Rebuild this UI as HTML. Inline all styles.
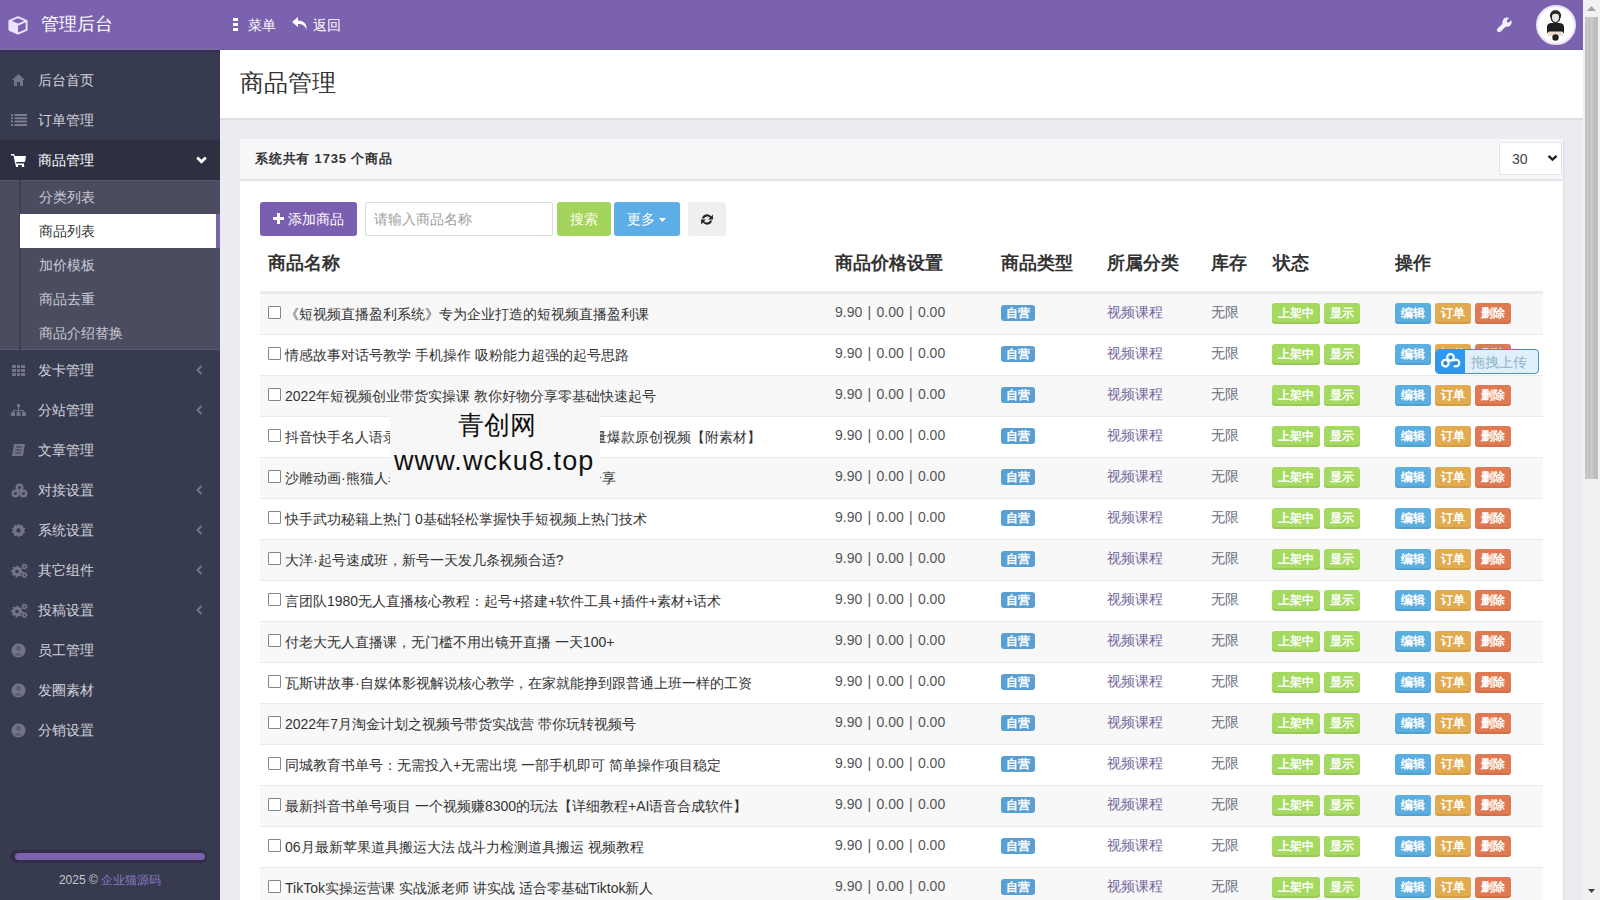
<!DOCTYPE html>
<html><head><meta charset="utf-8">
<style>
*{box-sizing:border-box;margin:0;padding:0}
html,body{width:1600px;height:900px;overflow:hidden;white-space:nowrap}
body{font-family:"Liberation Sans",sans-serif;font-size:14px;color:#333;background:#ebebf1;position:relative}
.abs{position:absolute}
#hdr{position:absolute;left:0;top:0;width:1583px;height:50px;background:#7a62ae;color:#fff}
#side{position:absolute;left:0;top:50px;width:220px;height:850px;background:#363b4f}
#sb{position:absolute;left:1583px;top:0;width:17px;height:900px;background:#f1f1f1}
.mi{position:absolute;left:0;width:220px;height:40px;color:#d0d1da;font-size:14px;line-height:40px}
.mi .t{position:absolute;left:38px;top:0}
.mi svg{position:absolute;left:11px;top:13px}
.mi .ar{position:absolute;left:196px;top:15px}
.sub{position:absolute;left:20px;width:200px;height:34px;line-height:34px;color:#c9cad4;padding-left:19px}
#tbl{position:absolute;left:260px;top:0;width:1283px;height:900px}
.th{position:absolute;top:250px;font-size:18px;font-weight:bold;line-height:26px;color:#333}
.row{position:absolute;left:0;width:1283px;height:41px;border-top:1px solid #eaeaea}
.row span{position:absolute}
.cb{left:8px;top:12px;width:13px;height:13px;border:1px solid #858585;border-radius:1px;background:#fff}
.nm{left:25px;top:10px;line-height:20px;color:#333;white-space:nowrap}
.pr{left:575px;top:8px;line-height:20px;color:#555;word-spacing:1.4px}
.lb{left:741px;top:11px;width:34px;height:16px;line-height:16px;border-radius:3px;background:#5a9fd2;color:#fff;font-size:12px;font-weight:bold;text-align:center}
.ct{left:847px;top:8px;line-height:20px;color:#74679c}
.st{left:951px;top:8px;line-height:20px;color:#6a6c80}
.b{top:9px;height:21px;width:36px;line-height:21px;border-radius:3px;color:#fff;font-size:12px;font-weight:bold;text-align:center;box-shadow:inset 0 -2px 0 rgba(0,0,0,0.07)}
.g{background:#a5d960}.bl{background:#5aaee0}.or{background:#e2ab50}.rd{background:#e07a52}
.btn{position:absolute;top:202px;height:34px;line-height:34px;border-radius:3px;color:#fff;text-align:center;font-size:14px}
</style></head>
<body>
<div id="hdr"><div class="abs" style="left:0;top:48px;width:220px;height:2px;background:#786d9f"></div><div class="abs" style="left:220px;top:49px;width:1363px;height:1px;background:#6e6198"></div>
  <svg class="abs" style="left:8px;top:16px" width="20" height="19" viewBox="0 0 20 19"><path d="M10 1.2 L18.6 4.8 L18.6 13.8 L10 17.6 L1.4 13.8 L1.4 4.8 Z" fill="none" stroke="#ece4fc" stroke-width="1.9" stroke-linejoin="round"/><path d="M1.4 4.8 L10 8.6 L10 17.6 L1.4 13.8Z" fill="#ece4fc"/><path d="M1.4 4.8 L10 8.6 L18.6 4.8" fill="none" stroke="#ece4fc" stroke-width="1.9"/></svg>
  <div class="abs" style="left:41px;top:12px;font-size:18px;line-height:24px">管理后台</div>
  <svg class="abs" style="left:233px;top:18px" width="5" height="13" viewBox="0 0 5 13"><rect x="0" y="0" width="5" height="3" fill="#fff"/><rect x="0" y="5" width="5" height="3" fill="#fff"/><rect x="0" y="10" width="5" height="3" fill="#fff"/></svg>
  <div class="abs" style="left:248px;top:15px;font-size:14px;line-height:20px">菜单</div>
  <svg class="abs" style="left:292px;top:17px" width="16" height="14" viewBox="0 0 16 14"><path d="M6 0 L0 5 L6 10 L6 7 C10 7 13 8 14.5 13 C15 7 12 3.5 6 3.5 Z" fill="#fff"/></svg>
  <div class="abs" style="left:313px;top:15px;font-size:14px;line-height:20px">返回</div>
  <svg class="abs" style="left:1496px;top:17px" width="16" height="16" viewBox="0 0 16 16"><line x1="3.2" y1="13" x2="9.5" y2="6.7" stroke="#f6f1ff" stroke-width="4.4" stroke-linecap="round"/><circle cx="11" cy="5.2" r="4.6" fill="#f6f1ff"/><circle cx="12.2" cy="4" r="1.5" fill="#7a62ae"/><path d="M11.2 3 L14.2 0 L16.2 2 L13.2 5Z" fill="#7a62ae"/></svg>
  <div class="abs" style="left:1536px;top:5px;width:40px;height:40px;border-radius:50%;background:#fff;border:2px solid #e9e1f6;overflow:hidden">
    <svg style="position:absolute;left:-2px;top:-2px" width="40" height="40" viewBox="0 0 40 40"><path d="M11 28 L11 22 Q11 18.5 15 18 L24 18 Q28 18.5 28 22 L28 28 Z" fill="#1f1f1f"/><rect x="11.5" y="26.5" width="16" height="4.5" rx="2" fill="#f0dccd"/><ellipse cx="19.5" cy="10.5" rx="5.6" ry="5" fill="#2a2a2a"/><ellipse cx="19.5" cy="12.3" rx="4.2" ry="5.4" fill="#ebe4e2" stroke="#1f1f1f" stroke-width="1.2"/><path d="M14.6 10.5 Q14.6 5.2 19.5 5.2 Q24.4 5.2 24.4 10.5 Q22 8.6 19.5 8.8 Q17 8.6 14.6 10.5Z" fill="#2a2a2a"/><circle cx="19.5" cy="32.5" r="3.2" fill="#1f1f1f"/></svg>
  </div>
</div>
<div id="side">
  <div class="abs" style="left:0;top:0;width:220px;height:4px;background:linear-gradient(#382c5b 0,#382c5b 2px,#3b3354 2px,#3b3354 3px,#3c3950 3px)"></div>
  <div class="mi" style="top:10px"><svg width="15" height="14" viewBox="0 0 15 14"><path d="M7.5 1 L14 7 L12 7 L12 13 L9 13 L9 9 L6 9 L6 13 L3 13 L3 7 L1 7 Z" fill="#737487"/></svg><span class="t">后台首页</span></div>
  <div class="mi" style="top:50px"><svg width="17" height="14" viewBox="0 0 17 14"><path d="M0 1h2v2h-2zM3.5 1h12.5v2h-12.5zM0 4.3h2v2h-2zM3.5 4.3h12.5v2h-12.5zM0 7.6h2v2h-2zM3.5 7.6h12.5v2h-12.5zM0 10.9h2v2h-2zM3.5 10.9h12.5v2h-12.5z" fill="#7c7d90"/></svg><span class="t">订单管理</span></div>
  <div class="mi" style="top:90px;background:#2e3042;color:#fff"><svg width="16" height="14" viewBox="0 0 16 14"><path d="M0 1 L3 1 L4 3 L15 3 L14 9 L5 9 L5.5 10.5 L13 10.5 L13 12 L4.5 12 L2.5 2.5 L0 2.5Z" fill="#fff"/><circle cx="6" cy="13" r="1.3" fill="#fff"/><circle cx="12" cy="13" r="1.3" fill="#fff"/></svg><span class="t">商品管理</span><svg style="left:196px;top:16px" width="11" height="8" viewBox="0 0 11 8"><path d="M1.2 1.5 L5.5 5.8 L9.8 1.5" stroke="#fff" stroke-width="2.8" fill="none"/></svg></div>
  <div class="abs" style="left:0;top:130px;width:220px;height:170px;background:#4b4c60;border-top:1px solid #56576a;border-bottom:1px solid #5a5b6e"></div>
  <div class="abs" style="left:19px;top:130px;width:2px;height:170px;background:#3f4053"></div>
  <div class="sub" style="top:130px">分类列表</div>
  <div class="sub" style="top:164px;background:#fff;color:#333;width:196px">商品列表</div>
  <div class="abs" style="left:216px;top:164px;width:4px;height:34px;background:#7a62ae"></div>
  <div class="sub" style="top:198px">加价模板</div>
  <div class="sub" style="top:232px">商品去重</div>
  <div class="sub" style="top:266px">商品介绍替换</div>
  <div class="mi" style="top:300px"><svg width="15" height="14" viewBox="0 0 15 14"><path d="M1 2h4v3h-4zM6 2h3v3h-3zM10 2h4v3h-4zM1 6h4v3h-4zM6 6h3v3h-3zM10 6h4v3h-4zM1 10h4v3h-4zM6 10h3v3h-3zM10 10h4v3h-4z" fill="#737487"/></svg><span class="t">发卡管理</span><svg class="ar" width="7" height="10" viewBox="0 0 7 10"><path d="M5.5 1 L1.5 5 L5.5 9" stroke="#737487" stroke-width="2" fill="none"/></svg></div>
  <div class="mi" style="top:340px"><svg width="15" height="14" viewBox="0 0 15 14"><path d="M6 1h3v3h-3zM7 4h1v3h-1zM2 7h11v1h-11zM2 7h1v2h-1zM12 7h1v2h-1zM7 7h1v2h-1zM0 9h4v4h-4zM5.5 9h4v4h-4zM11 9h4v4h-4z" fill="#737487"/></svg><span class="t">分站管理</span><svg class="ar" width="7" height="10" viewBox="0 0 7 10"><path d="M5.5 1 L1.5 5 L5.5 9" stroke="#737487" stroke-width="2" fill="none"/></svg></div>
  <div class="mi" style="top:380px"><svg width="15" height="14" viewBox="0 0 15 14"><path d="M3 1 L14 1 L12 13 L1 13 Z" fill="#737487"/><path d="M5 4h6M4.5 7h6M4 10h6" stroke="#363b4f" stroke-width="1.2"/></svg><span class="t">文章管理</span></div>
  <div class="mi" style="top:420px"><svg width="17" height="15" viewBox="0 0 17 15"><circle cx="8.5" cy="4.5" r="4" fill="#737487"/><circle cx="4.5" cy="10.5" r="4" fill="#737487"/><circle cx="12.5" cy="10.5" r="4" fill="#737487"/><circle cx="8.5" cy="4.5" r="1.5" fill="#363b4f"/><circle cx="4.5" cy="10.5" r="1.5" fill="#363b4f"/><circle cx="12.5" cy="10.5" r="1.5" fill="#363b4f"/></svg><span class="t">对接设置</span><svg class="ar" width="7" height="10" viewBox="0 0 7 10"><path d="M5.5 1 L1.5 5 L5.5 9" stroke="#737487" stroke-width="2" fill="none"/></svg></div>
  <div class="mi" style="top:460px"><svg width="15" height="15" viewBox="0 0 15 15"><path d="M7.5 0.5 L9 2.5 L11.5 1.8 L12 4.3 L14.3 5.5 L13 7.5 L14.3 9.5 L12 10.7 L11.5 13.2 L9 12.5 L7.5 14.5 L6 12.5 L3.5 13.2 L3 10.7 L0.7 9.5 L2 7.5 L0.7 5.5 L3 4.3 L3.5 1.8 L6 2.5 Z" fill="#737487"/><circle cx="7.5" cy="7.5" r="2.2" fill="#363b4f"/></svg><span class="t">系统设置</span><svg class="ar" width="7" height="10" viewBox="0 0 7 10"><path d="M5.5 1 L1.5 5 L5.5 9" stroke="#737487" stroke-width="2" fill="none"/></svg></div>
  <div class="mi" style="top:500px"><svg width="17" height="16" viewBox="0 0 17 16"><path d="M12.00 8.50 L11.88 9.67 L10.25 10.26 L9.82 11.06 L10.24 12.74 L9.33 13.49 L7.76 12.75 L6.90 13.01 L6.00 14.50 L4.83 14.38 L4.24 12.75 L3.44 12.32 L1.76 12.74 L1.01 11.83 L1.75 10.26 L1.49 9.40 L0.00 8.50 L0.12 7.33 L1.75 6.74 L2.18 5.94 L1.76 4.26 L2.67 3.51 L4.24 4.25 L5.10 3.99 L6.00 2.50 L7.17 2.62 L7.76 4.25 L8.56 4.68 L10.24 4.26 L10.99 5.17 L10.25 6.74 L10.51 7.60ZM16.70 3.50 L16.59 4.33 L15.58 4.70 L15.20 5.20 L15.10 6.27 L14.33 6.59 L13.50 5.90 L12.88 5.82 L11.90 6.27 L11.24 5.76 L11.42 4.70 L11.18 4.12 L10.30 3.50 L10.41 2.67 L11.42 2.30 L11.80 1.80 L11.90 0.73 L12.67 0.41 L13.50 1.10 L14.12 1.18 L15.10 0.73 L15.76 1.24 L15.58 2.30 L15.82 2.88ZM16.70 12.00 L16.59 12.83 L15.58 13.20 L15.20 13.70 L15.10 14.77 L14.33 15.09 L13.50 14.40 L12.88 14.32 L11.90 14.77 L11.24 14.26 L11.42 13.20 L11.18 12.62 L10.30 12.00 L10.41 11.17 L11.42 10.80 L11.80 10.30 L11.90 9.23 L12.67 8.91 L13.50 9.60 L14.12 9.68 L15.10 9.23 L15.76 9.74 L15.58 10.80 L15.82 11.38Z" fill="#737487"/><circle cx="6" cy="8.5" r="1.8" fill="#363b4f"/><circle cx="13.5" cy="3.5" r="0.9" fill="#363b4f"/><circle cx="13.5" cy="12" r="0.9" fill="#363b4f"/></svg><span class="t">其它组件</span><svg class="ar" width="7" height="10" viewBox="0 0 7 10"><path d="M5.5 1 L1.5 5 L5.5 9" stroke="#737487" stroke-width="2" fill="none"/></svg></div>
  <div class="mi" style="top:540px"><svg width="17" height="16" viewBox="0 0 17 16"><path d="M12.00 8.50 L11.88 9.67 L10.25 10.26 L9.82 11.06 L10.24 12.74 L9.33 13.49 L7.76 12.75 L6.90 13.01 L6.00 14.50 L4.83 14.38 L4.24 12.75 L3.44 12.32 L1.76 12.74 L1.01 11.83 L1.75 10.26 L1.49 9.40 L0.00 8.50 L0.12 7.33 L1.75 6.74 L2.18 5.94 L1.76 4.26 L2.67 3.51 L4.24 4.25 L5.10 3.99 L6.00 2.50 L7.17 2.62 L7.76 4.25 L8.56 4.68 L10.24 4.26 L10.99 5.17 L10.25 6.74 L10.51 7.60ZM16.70 3.50 L16.59 4.33 L15.58 4.70 L15.20 5.20 L15.10 6.27 L14.33 6.59 L13.50 5.90 L12.88 5.82 L11.90 6.27 L11.24 5.76 L11.42 4.70 L11.18 4.12 L10.30 3.50 L10.41 2.67 L11.42 2.30 L11.80 1.80 L11.90 0.73 L12.67 0.41 L13.50 1.10 L14.12 1.18 L15.10 0.73 L15.76 1.24 L15.58 2.30 L15.82 2.88ZM16.70 12.00 L16.59 12.83 L15.58 13.20 L15.20 13.70 L15.10 14.77 L14.33 15.09 L13.50 14.40 L12.88 14.32 L11.90 14.77 L11.24 14.26 L11.42 13.20 L11.18 12.62 L10.30 12.00 L10.41 11.17 L11.42 10.80 L11.80 10.30 L11.90 9.23 L12.67 8.91 L13.50 9.60 L14.12 9.68 L15.10 9.23 L15.76 9.74 L15.58 10.80 L15.82 11.38Z" fill="#737487"/><circle cx="6" cy="8.5" r="1.8" fill="#363b4f"/><circle cx="13.5" cy="3.5" r="0.9" fill="#363b4f"/><circle cx="13.5" cy="12" r="0.9" fill="#363b4f"/></svg><span class="t">投稿设置</span><svg class="ar" width="7" height="10" viewBox="0 0 7 10"><path d="M5.5 1 L1.5 5 L5.5 9" stroke="#737487" stroke-width="2" fill="none"/></svg></div>
  <div class="mi" style="top:580px"><svg width="15" height="15" viewBox="0 0 15 15"><circle cx="7.5" cy="7.5" r="7" fill="#737487"/><circle cx="7.5" cy="5.5" r="2.5" fill="#5c5e70"/><path d="M3 12.5 Q7.5 7 12 12.5Z" fill="#5c5e70"/></svg><span class="t">员工管理</span></div>
  <div class="mi" style="top:620px"><svg width="15" height="15" viewBox="0 0 15 15"><circle cx="7.5" cy="7.5" r="7" fill="#737487"/><circle cx="7.5" cy="5.5" r="2.5" fill="#5c5e70"/><path d="M3 12.5 Q7.5 7 12 12.5Z" fill="#5c5e70"/></svg><span class="t">发圈素材</span></div>
  <div class="mi" style="top:660px"><svg width="15" height="15" viewBox="0 0 15 15"><circle cx="7.5" cy="7.5" r="7" fill="#737487"/><circle cx="7.5" cy="5.5" r="2.5" fill="#5c5e70"/><path d="M3 12.5 Q7.5 7 12 12.5Z" fill="#5c5e70"/></svg><span class="t">分销设置</span></div>
  <div class="abs" style="left:10px;top:800px;width:197px;height:13px;border-radius:6px;background:#322e4a"></div><div class="abs" style="left:15px;top:803px;width:190px;height:7px;border-radius:4px;background:#7a62ae"></div>
  <div class="abs" style="left:0;top:822px;width:220px;text-align:center;font-size:12px;line-height:16px;color:#c8c8d0">2025 © <span style="color:#8a78c0">企业猫源码</span></div>
</div>
<!-- content -->
<div class="abs" style="left:220px;top:50px;width:1363px;height:70px;background:#fff;border-bottom:2px solid #dedee4"></div>
<div class="abs" style="left:240px;top:67px;font-size:24px;line-height:32px;color:#333">商品管理</div>
<div class="abs" style="left:240px;top:139px;width:1323px;height:761px;background:#fff;box-shadow:1px 1px 2px rgba(0,0,0,0.06)"></div>
<div class="abs" style="left:240px;top:139px;width:1323px;height:42px;background:#f8f8fa;border-bottom:2px solid #e4e4e9"></div>
<div class="abs" style="left:255px;top:149px;font-size:13px;font-weight:bold;line-height:20px;letter-spacing:0.8px">系统共有 1735 个商品</div>
<div class="abs" style="left:1499px;top:142px;width:63px;height:33px;background:#fff;border:1px solid #e3e3e8;border-radius:2px"></div>
<div class="abs" style="left:1512px;top:149px;font-size:14px;line-height:20px;color:#444">30</div>
<svg class="abs" style="left:1547px;top:154px" width="11" height="8" viewBox="0 0 11 8"><path d="M1.5 1.8 L5.5 5.6 L9.5 1.8" stroke="#222" stroke-width="2.4" fill="none"/></svg>
<!-- toolbar -->
<div class="btn" style="left:260px;width:97px;background:#7a5fb0">
  <svg style="position:absolute;left:13px;top:11px" width="11" height="11" viewBox="0 0 11 11"><path d="M4 0h3v4h4v3h-4v4h-3v-4h-4v-3h4z" fill="#fff"/></svg><span style="position:absolute;left:28px;top:0">添加商品</span></div>
<div class="abs" style="left:365px;top:202px;width:188px;height:34px;border:1px solid #dcdcdc;border-radius:2px;background:#fff"></div>
<div class="abs" style="left:374px;top:209px;line-height:20px;color:#a0a0a0;font-size:14px">请输入商品名称</div>
<div class="btn" style="left:557px;width:54px;background:#a3d45c;color:#fbfce8">搜索</div>
<div class="btn" style="left:614px;width:66px;background:#5daee6"><span style="position:absolute;left:13px;top:0">更多</span><svg style="position:absolute;left:45px;top:16px" width="7" height="4" viewBox="0 0 7 4"><path d="M0 0h7l-3.5 4z" fill="#fff"/></svg></div>
<div class="btn" style="left:688px;width:38px;background:#efefef"><svg style="position:absolute;left:12px;top:11px" width="14" height="13" viewBox="0 0 14 13"><path d="M2 5.5 A5 5 0 0 1 11 3.5 L12.8 1.5 L13 6.5 L8 6.5 L10 4.8 A3.5 3.5 0 0 0 4 5.5Z M12 7.5 A5 5 0 0 1 3 9.5 L1.2 11.5 L1 6.5 L6 6.5 L4 8.2 A3.5 3.5 0 0 0 10 7.5Z" fill="#222"/></svg></div>
<!-- table -->
<div id="tbl">
<div class="th" style="left:8px">商品名称</div>
<div class="th" style="left:575px">商品价格设置</div>
<div class="th" style="left:741px">商品类型</div>
<div class="th" style="left:847px">所属分类</div>
<div class="th" style="left:951px">库存</div>
<div class="th" style="left:1013px">状态</div>
<div class="th" style="left:1135px">操作</div>
<div class="abs" style="left:0;top:291px;width:1283px;height:2px;background:#ececec"></div>
<div class="row" style="top:293px;background:#f8f8f8">
<span class="cb"></span><span class="nm">《短视频直播盈利系统》专为企业打造的短视频直播盈利课</span><span class="pr">9.90 | 0.00 | 0.00</span><span class="lb">自营</span><span class="ct">视频课程</span><span class="st">无限</span><span class="b g" style="left:1012px;width:48px">上架中</span><span class="b g" style="left:1064px;width:36px">显示</span><span class="b bl" style="left:1135px">编辑</span><span class="b or" style="left:1175px">订单</span><span class="b rd" style="left:1215px">删除</span></div>
<div class="row" style="top:334px;background:#fff">
<span class="cb"></span><span class="nm">情感故事对话号教学 手机操作 吸粉能力超强的起号思路</span><span class="pr">9.90 | 0.00 | 0.00</span><span class="lb">自营</span><span class="ct">视频课程</span><span class="st">无限</span><span class="b g" style="left:1012px;width:48px">上架中</span><span class="b g" style="left:1064px;width:36px">显示</span><span class="b bl" style="left:1135px">编辑</span><span class="b or" style="left:1175px">订单</span><span class="b rd" style="left:1215px">删除</span></div>
<div class="row" style="top:375px;background:#f8f8f8">
<span class="cb"></span><span class="nm">2022年短视频创业带货实操课 教你好物分享零基础快速起号</span><span class="pr">9.90 | 0.00 | 0.00</span><span class="lb">自营</span><span class="ct">视频课程</span><span class="st">无限</span><span class="b g" style="left:1012px;width:48px">上架中</span><span class="b g" style="left:1064px;width:36px">显示</span><span class="b bl" style="left:1135px">编辑</span><span class="b or" style="left:1175px">订单</span><span class="b rd" style="left:1215px">删除</span></div>
<div class="row" style="top:416px;background:#fff">
<span class="cb"></span><span class="nm">抖音快手名人语录视频制作，每天轻松批量打造流量爆款原创视频【附素材】</span><span class="pr">9.90 | 0.00 | 0.00</span><span class="lb">自营</span><span class="ct">视频课程</span><span class="st">无限</span><span class="b g" style="left:1012px;width:48px">上架中</span><span class="b g" style="left:1064px;width:36px">显示</span><span class="b bl" style="left:1135px">编辑</span><span class="b or" style="left:1175px">订单</span><span class="b rd" style="left:1215px">删除</span></div>
<div class="row" style="top:457px;background:#f8f8f8">
<span class="cb"></span><span class="nm">沙雕动画·熊猫人表情包视频制作全套教程， 干货分享</span><span class="pr">9.90 | 0.00 | 0.00</span><span class="lb">自营</span><span class="ct">视频课程</span><span class="st">无限</span><span class="b g" style="left:1012px;width:48px">上架中</span><span class="b g" style="left:1064px;width:36px">显示</span><span class="b bl" style="left:1135px">编辑</span><span class="b or" style="left:1175px">订单</span><span class="b rd" style="left:1215px">删除</span></div>
<div class="row" style="top:498px;background:#fff">
<span class="cb"></span><span class="nm">快手武功秘籍上热门 0基础轻松掌握快手短视频上热门技术</span><span class="pr">9.90 | 0.00 | 0.00</span><span class="lb">自营</span><span class="ct">视频课程</span><span class="st">无限</span><span class="b g" style="left:1012px;width:48px">上架中</span><span class="b g" style="left:1064px;width:36px">显示</span><span class="b bl" style="left:1135px">编辑</span><span class="b or" style="left:1175px">订单</span><span class="b rd" style="left:1215px">删除</span></div>
<div class="row" style="top:539px;background:#f8f8f8">
<span class="cb"></span><span class="nm">大洋·起号速成班，新号一天发几条视频合适?</span><span class="pr">9.90 | 0.00 | 0.00</span><span class="lb">自营</span><span class="ct">视频课程</span><span class="st">无限</span><span class="b g" style="left:1012px;width:48px">上架中</span><span class="b g" style="left:1064px;width:36px">显示</span><span class="b bl" style="left:1135px">编辑</span><span class="b or" style="left:1175px">订单</span><span class="b rd" style="left:1215px">删除</span></div>
<div class="row" style="top:580px;background:#fff">
<span class="cb"></span><span class="nm">言团队1980无人直播核心教程：起号+搭建+软件工具+插件+素材+话术</span><span class="pr">9.90 | 0.00 | 0.00</span><span class="lb">自营</span><span class="ct">视频课程</span><span class="st">无限</span><span class="b g" style="left:1012px;width:48px">上架中</span><span class="b g" style="left:1064px;width:36px">显示</span><span class="b bl" style="left:1135px">编辑</span><span class="b or" style="left:1175px">订单</span><span class="b rd" style="left:1215px">删除</span></div>
<div class="row" style="top:621px;background:#f8f8f8">
<span class="cb"></span><span class="nm">付老大无人直播课，无门槛不用出镜开直播 一天100+</span><span class="pr">9.90 | 0.00 | 0.00</span><span class="lb">自营</span><span class="ct">视频课程</span><span class="st">无限</span><span class="b g" style="left:1012px;width:48px">上架中</span><span class="b g" style="left:1064px;width:36px">显示</span><span class="b bl" style="left:1135px">编辑</span><span class="b or" style="left:1175px">订单</span><span class="b rd" style="left:1215px">删除</span></div>
<div class="row" style="top:662px;background:#fff">
<span class="cb"></span><span class="nm">瓦斯讲故事·自媒体影视解说核心教学，在家就能挣到跟普通上班一样的工资</span><span class="pr">9.90 | 0.00 | 0.00</span><span class="lb">自营</span><span class="ct">视频课程</span><span class="st">无限</span><span class="b g" style="left:1012px;width:48px">上架中</span><span class="b g" style="left:1064px;width:36px">显示</span><span class="b bl" style="left:1135px">编辑</span><span class="b or" style="left:1175px">订单</span><span class="b rd" style="left:1215px">删除</span></div>
<div class="row" style="top:703px;background:#f8f8f8">
<span class="cb"></span><span class="nm">2022年7月淘金计划之视频号带货实战营 带你玩转视频号</span><span class="pr">9.90 | 0.00 | 0.00</span><span class="lb">自营</span><span class="ct">视频课程</span><span class="st">无限</span><span class="b g" style="left:1012px;width:48px">上架中</span><span class="b g" style="left:1064px;width:36px">显示</span><span class="b bl" style="left:1135px">编辑</span><span class="b or" style="left:1175px">订单</span><span class="b rd" style="left:1215px">删除</span></div>
<div class="row" style="top:744px;background:#fff">
<span class="cb"></span><span class="nm">同城教育书单号：无需投入+无需出境 一部手机即可 简单操作项目稳定</span><span class="pr">9.90 | 0.00 | 0.00</span><span class="lb">自营</span><span class="ct">视频课程</span><span class="st">无限</span><span class="b g" style="left:1012px;width:48px">上架中</span><span class="b g" style="left:1064px;width:36px">显示</span><span class="b bl" style="left:1135px">编辑</span><span class="b or" style="left:1175px">订单</span><span class="b rd" style="left:1215px">删除</span></div>
<div class="row" style="top:785px;background:#f8f8f8">
<span class="cb"></span><span class="nm">最新抖音书单号项目 一个视频赚8300的玩法【详细教程+AI语音合成软件】</span><span class="pr">9.90 | 0.00 | 0.00</span><span class="lb">自营</span><span class="ct">视频课程</span><span class="st">无限</span><span class="b g" style="left:1012px;width:48px">上架中</span><span class="b g" style="left:1064px;width:36px">显示</span><span class="b bl" style="left:1135px">编辑</span><span class="b or" style="left:1175px">订单</span><span class="b rd" style="left:1215px">删除</span></div>
<div class="row" style="top:826px;background:#fff">
<span class="cb"></span><span class="nm">06月最新苹果道具搬运大法 战斗力检测道具搬运 视频教程</span><span class="pr">9.90 | 0.00 | 0.00</span><span class="lb">自营</span><span class="ct">视频课程</span><span class="st">无限</span><span class="b g" style="left:1012px;width:48px">上架中</span><span class="b g" style="left:1064px;width:36px">显示</span><span class="b bl" style="left:1135px">编辑</span><span class="b or" style="left:1175px">订单</span><span class="b rd" style="left:1215px">删除</span></div>
<div class="row" style="top:867px;background:#f8f8f8">
<span class="cb"></span><span class="nm">TikTok实操运营课 实战派老师 讲实战 适合零基础Tiktok新人</span><span class="pr">9.90 | 0.00 | 0.00</span><span class="lb">自营</span><span class="ct">视频课程</span><span class="st">无限</span><span class="b g" style="left:1012px;width:48px">上架中</span><span class="b g" style="left:1064px;width:36px">显示</span><span class="b bl" style="left:1135px">编辑</span><span class="b or" style="left:1175px">订单</span><span class="b rd" style="left:1215px">删除</span></div>
</div>
<!-- watermark -->
<div class="abs" style="left:390px;top:405px;width:210px;height:86px;background:#f7f7f7"></div>
<div class="abs" style="left:458px;top:408px;font-size:26px;line-height:34px;color:#111">青创网</div>
<div class="abs" style="left:394px;top:444px;font-size:27px;letter-spacing:1.1px;line-height:34px;color:#111">www.wcku8.top</div>
<!-- upload widget -->
<div class="abs" style="left:1435px;top:349px;width:104px;height:25px;border:1px solid #4f8fbf;border-radius:4px;background:#dff0fc;overflow:hidden">
  <div class="abs" style="left:0;top:0;width:29px;height:25px;background:#2e98ee"></div>
  <svg class="abs" style="left:5px;top:3px" width="20" height="17" viewBox="0 0 20 17"><circle cx="9.5" cy="4.3" r="3.3" fill="#2a86cf" stroke="#f4fdff" stroke-width="2.3"/><circle cx="4.4" cy="10.2" r="3.3" fill="#2a86cf" stroke="#f4fdff" stroke-width="2.3"/><path d="M12.2 8.2 A3.3 3.3 0 1 1 12.9 12.6" fill="#2a86cf" stroke="#f4fdff" stroke-width="2.3"/></svg>
  <div class="abs" style="left:35px;top:2px;font-size:14px;line-height:20px;color:#93b4c8">拖拽上传</div>
</div>
<div id="sb">
  <svg class="abs" style="left:4px;top:6px" width="9" height="5" viewBox="0 0 9 5"><path d="M0 5h9L4.5 0z" fill="#a3a3a3"/></svg>
  <div class="abs" style="left:2px;top:17px;width:13px;height:462px;background:linear-gradient(to right,#c3c3c3 0,#c3c3c3 2px,#cacaca 2px,#cacaca 4px,#b9b9b9 4px,#b9b9b9 5px,#cbcbcb 5px,#cbcbcb 7px,#c4c4c4 7px,#c4c4c4 9px,#bdbdbd 9px)"></div>
  <svg class="abs" style="left:5px;top:889px" width="7" height="4" viewBox="0 0 7 4"><path d="M0 0h7L3.5 4z" fill="#404040"/></svg>
</div>
<script>
(function(){
  try{
    var b=document.body, s=document.createElement('span');
    s.style.cssText='position:absolute;left:0;top:0;visibility:hidden;font-size:100px;font-family:"Liberation Sans",sans-serif;white-space:nowrap;letter-spacing:0';
    s.textContent='\u7BA1\u7406\u540E\u53F0\u5546\u54C1\u7BA1\u7406\u89C6\u9891';
    b.appendChild(s);
    var w=s.getBoundingClientRect().width/10;
    b.removeChild(s);
    if(!(w>0) || w>=92) return;
    var extra=(100/w).toFixed(3)+'em';
    var re=/[\u2E80-\u9FFF\u3000-\u303F\uFF00-\uFFEF]+/g;
    var walker=document.createTreeWalker(b,NodeFilter.SHOW_TEXT,null,false), nodes=[], n;
    while((n=walker.nextNode())){ if(n.parentNode && n.parentNode.nodeName!=='SCRIPT' && n.parentNode.nodeName!=='STYLE' && /[\u2E80-\u9FFF\u3000-\u303F\uFF00-\uFFEF]/.test(n.nodeValue)) nodes.push(n); }
    nodes.forEach(function(node){
      var txt=node.nodeValue, frag=document.createDocumentFragment(), last=0, m;
      re.lastIndex=0;
      while((m=re.exec(txt))){
        if(m.index>last) frag.appendChild(document.createTextNode(txt.slice(last,m.index)));
        var e=document.createElement('x-c'); e.style.fontSize=extra; var fw=parseInt(getComputedStyle(node.parentNode).fontWeight,10)||400; e.style.webkitTextStroke=(fw>=600?'0.7px':'0.2px')+' currentColor'; e.textContent=m[0];
        frag.appendChild(e); last=m.index+m[0].length;
      }
      if(last<txt.length) frag.appendChild(document.createTextNode(txt.slice(last)));
      node.parentNode.replaceChild(frag,node);
    });
  }catch(err){}
})();
</script>
</body></html>
